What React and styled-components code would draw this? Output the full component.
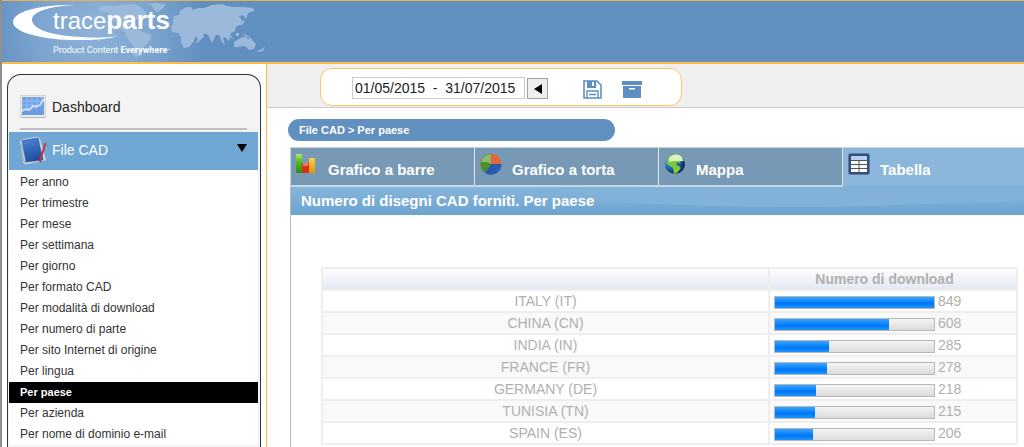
import React from 'react';
import styled, { createGlobalStyle, css } from 'styled-components';

const menuItems = [
    'Per anno',
    'Per trimestre',
    'Per mese',
    'Per settimana',
    'Per giorno',
    'Per formato CAD',
    'Per modalità di download',
    'Per numero di parte',
    'Per sito Internet di origine',
    'Per lingua',
    'Per paese',
    'Per azienda',
    'Per nome di dominio e-mail',
];

const downloads = [
    { country: 'ITALY (IT)', total: 849, share: 100 },
    { country: 'CHINA (CN)', total: 608, share: 72 },
    { country: 'INDIA (IN)', total: 285, share: 34 },
    { country: 'FRANCE (FR)', total: 278, share: 33 },
    { country: 'GERMANY (DE)', total: 218, share: 26 },
    { country: 'TUNISIA (TN)', total: 215, share: 25 },
    { country: 'SPAIN (ES)', total: 206, share: 24 },
];

function WorldMap() {
    return (
        <svg width="280" height="61" viewBox="2 1 280 61" aria-hidden="true">
            <defs>
                <radialGradient id="glow" gradientUnits="userSpaceOnUse" cx="95" cy="30" r="110">
                    <stop offset="0" stopColor="#8fb2d7" />
                    <stop offset="0.5" stopColor="#7da5d0" />
                    <stop offset="1" stopColor="#618fbf" />
                </radialGradient>
            </defs>
            <rect x="2" y="1" width="280" height="61" fill="url(#glow)" />
            <g fill="#9bbadb">
                <path d="M98 8l6-3 10 1 8-1 8-1 7 1 6 4 4 5-4 4-8 2-4 5-3 5 5 3-1 2-8-3-6-6-5-8-6-6-6 0z" />
                <path d="M147 4l9-1 10 1-3 4-5 4-4-2-2-4z" />
                <path d="M126 32l4-3 8 0 5 3 8 3 0 4-4 5-4 4-3 5-3 5-3-2 0-9-5-6-3-5z" />
                <path d="M173 21l1-5 5-1 1-4 6-4 5 0 2 3 5-2 6 0 8-3 10-1 5 2 7 1 9 0 10 1 1 3-6 2-2 6-3-4-4 1 3 4-1 4-5 3-1 4-4 2-1 3-1 5-4-4-2 1 2 7-3-3-3-7-3 0-4 8-3-6-2-3-4 0 1 3-5 4-4-6-2-3-7 0-2-3-3 1-2-2-5 2z" />
                <path d="M173 23l6-2 6 2 8 0 3 6 4 2-5 6-1 4-5 6-5 1-3-6 0-5-3-4-6-1-1-5z" />
                <path d="M198 39l2-1-2 5-2 0z" />
                <path d="M234 42l5-3 3-2 5 0 1 3 2-3 3 4 3 3-2 5-5 1-4-4-7 1-4 0z" />
                <path d="M228 34l3 2 3 3-3-1zM236 33l3 0 0 3-3 0zM243 34l6 2 0 1-5-1zM257 51l5-2 3-3-2 5-5 1zM243 20l2 1-3 4-2 0z" />
            </g>
        </svg>
    );
}

function Swoosh() {
    return (
        <svg width="110" height="40" viewBox="0 0 110 40" aria-hidden="true">
            <path
                fill="#fff"
                d="M64 2C30 1 1 8 1 19c0 12 38 19 69 18 14 0 26-1 36-4-12 2-26 2-36 1C45 33 21 28 20 17 20 8 40 3 64 2z"
            />
        </svg>
    );
}

function DashboardIcon() {
    return (
        <svg width="26" height="24" viewBox="0 0 26 24" aria-hidden="true">
            <rect x="0.5" y="0.5" width="25" height="22" fill="#ececec" stroke="#d4d4d4" />
            <path d="M1 22.500h24" stroke="#b4b4b4" />
            <rect x="2" y="2" width="22" height="18" fill="#73a3e8" />
            <path d="M2 6h22M2 10h22M2 14h22M7 2v18M12 2v18M17 2v18M22 2v18" stroke="#94bcf2" />
            <path d="M2 17l4-3 3 2 4-5 3 2 4-2 4-6v15H2z" fill="#5589d6" opacity="0.4" />
            <path d="M2 16l4-2 3 1 4-4 3 1 4-2 4-6" fill="none" stroke="#dfe9f8" strokeWidth="1.6" />
        </svg>
    );
}

function NotebookIcon() {
    return (
        <svg width="26" height="29" viewBox="0 0 26 29" aria-hidden="true">
            <defs>
                <linearGradient id="cover" x1="0" y1="0" x2="0.4" y2="1">
                    <stop offset="0" stopColor="#5287e0" />
                    <stop offset="1" stopColor="#1f4e9c" />
                </linearGradient>
            </defs>
            <path d="M0 5l3-2L18 0.500 20 3l6 21-3 1-18 3.500-2-2z" fill="#c8d6e6" />
            <path d="M2 4.500L18 2l5 22-17 2z" fill="url(#cover)" stroke="#34588f" strokeWidth="0.6" />
            <path d="M1 8l3 18 3 1" fill="none" stroke="#8d9db0" strokeWidth="0.8" />
            <path d="M25.500 7L21 22l-1 4" fill="none" stroke="#c3353a" strokeWidth="2" />
        </svg>
    );
}

function SaveIcon() {
    return (
        <svg width="19" height="19" viewBox="0 0 19 19" aria-hidden="true">
            <path d="M1 1h13l4 4v13H1z" fill="#fff" stroke="#5f8fc0" strokeWidth="1.6" />
            <path d="M4 1h9v7H4z" fill="#5f8fc0" />
            <path d="M9 2h2v4H9z" fill="#fff" />
            <path d="M4 18v-7h11v7M6 14.500h7" fill="none" stroke="#5f8fc0" strokeWidth="1.4" />
        </svg>
    );
}

function ArchiveIcon() {
    return (
        <svg width="20" height="19" viewBox="0 0 20 19" aria-hidden="true">
            <path d="M0 1h20v4H0zM1 6h18v12H1z" fill="#5f8fc0" />
            <path d="M7 8h6v1.500H7z" fill="#fff" />
        </svg>
    );
}

function BarsIcon() {
    return (
        <svg width="22" height="22" viewBox="0 0 22 22" aria-hidden="true">
            <defs>
                <linearGradient id="green" x1="0" y1="0" x2="0" y2="1">
                    <stop offset="0" stopColor="#b0f060" />
                    <stop offset="0.4" stopColor="#58b820" />
                    <stop offset="1" stopColor="#2f8d10" />
                </linearGradient>
                <linearGradient id="amber" x1="0" y1="0" x2="0" y2="1">
                    <stop offset="0" stopColor="#f8d048" />
                    <stop offset="1" stopColor="#e89408" />
                </linearGradient>
            </defs>
            <path d="M0 1h6v19H0z" fill="url(#green)" />
            <path d="M6 10h7v10H6z" fill="#d8301c" />
            <path d="M7 10h5v3H7z" fill="#ee7a5c" />
            <path d="M13 5h6v15h-6z" fill="url(#amber)" />
        </svg>
    );
}

function PieIcon() {
    return (
        <svg width="22" height="22" viewBox="0 0 22 22" aria-hidden="true">
            <circle cx="11" cy="12" r="10" fill="#3c5878" opacity="0.5" />
            <path d="M11 11V0.500a10.500 10.500 0 0 1 10.500 10.500z" fill="#e2683c" />
            <path d="M11 11h10.500A10.500 10.500 0 0 1 5 19.700z" fill="#2c58b4" />
            <path d="M11 11L5 19.700A10.500 10.500 0 0 1 11 0.500z" fill="#4f8c2c" />
            <path d="M11 11V1a10 10 0 0 0-10 9c4-2 7-1 10 1z" fill="#8cb870" />
        </svg>
    );
}

function GlobeIcon() {
    return (
        <svg width="22" height="22" viewBox="0 0 22 22" aria-hidden="true">
            <defs>
                <radialGradient id="sea" cx="0.3" cy="0.3" r="0.7">
                    <stop offset="0" stopColor="#a0d4f4" />
                    <stop offset="0.5" stopColor="#2c74b8" />
                    <stop offset="1" stopColor="#0c2c5c" />
                </radialGradient>
            </defs>
            <circle cx="11" cy="11" r="10" fill="url(#sea)" />
            <path d="M3 8c0-4 5-7 9-7 3 0 7 3 8 7l-3 0-1 2-3-1-1 3 3 1 2 2-4 5-3 1-1-6-4-3-2-1z" fill="#7cc838" />
            <path d="M5 5c3-4 9-5 13-1l1 4-5 0-5 0-4 1z" fill="#dcf0c4" />
        </svg>
    );
}

function TableIcon() {
    return (
        <svg width="22" height="22" viewBox="0 0 22 22" aria-hidden="true">
            <rect x="0.500" y="0.500" width="21" height="21" rx="2" fill="#345078" stroke="#5c7ca8" />
            <path d="M3 3h16v4H3z" fill="#b8ccf8" />
            <path d="M3 8h16v11H3z" fill="#fff" />
            <path d="M3 7.500h16M3 11.500h16M3 15.500h16M11 8v11" stroke="#50545c" />
        </svg>
    );
}

function Sidebar() {
    return (
        <SidebarColumn>
            <SidePanel>
                <MenuHeading href="#dashboard">
                    <DashboardIcon />
                    Dashboard
                </MenuHeading>
                <Divider />
                <MenuHeading href="#file-cad" $open>
                    <NotebookIcon />
                    File CAD
                    <Caret width="10" height="8" viewBox="0 0 10 8" aria-hidden="true">
                        <path d="M0 0h10L5 8z" />
                    </Caret>
                </MenuHeading>
                <Menu>
                    {menuItems.map((item) => (
                        <li key={item}>
                            <MenuLink href="#report" $active={item === 'Per paese'}>
                                {item}
                            </MenuLink>
                        </li>
                    ))}
                </Menu>
            </SidePanel>
        </SidebarColumn>
    );
}

function Toolbar() {
    return (
        <ToolbarStrip>
            <ToolbarBox>
                <DateInput
                    type="text"
                    aria-label="Periodo"
                    defaultValue={'01/05/2015\u00a0 -\u00a0 31/07/2015'}
                />
                <DateButton type="button" aria-label="Periodo precedente">
                    <svg width="8" height="10" viewBox="0 0 8 10" aria-hidden="true">
                        <path d="M8 0v10L0 5z" />
                    </svg>
                </DateButton>
                <ToolButtons>
                    <IconButton type="button" aria-label="Salva">
                        <SaveIcon />
                    </IconButton>
                    <IconButton type="button" aria-label="Archivia">
                        <ArchiveIcon />
                    </IconButton>
                </ToolButtons>
            </ToolbarBox>
        </ToolbarStrip>
    );
}

function DownloadTable() {
    return (
        <Table>
            <thead>
                <tr>
                    <HeadCell aria-label="Paese" />
                    <HeadCell $narrow>Numero di download</HeadCell>
                </tr>
            </thead>
            <tbody>
                {downloads.map(({ country, total, share }) => (
                    <Row key={country}>
                        <Cell>{country}</Cell>
                        <Cell>
                            <Meter>
                                <Track>
                                    <Fill style={{ width: `${share}%` }} />
                                </Track>
                                {total}
                            </Meter>
                        </Cell>
                    </Row>
                ))}
            </tbody>
        </Table>
    );
}

export default function App() {
    return (
        <Page>
            <GlobalStyle />
            <Header>
                <WorldMap />
                <Logo>
                    <Swoosh />
                    <Brand>
                        <BrandName>
                            trace<b>parts</b>
                        </BrandName>
                        <Slogan>
                            Product Content <b>Everywhere</b>
                            <small>™</small>
                        </Slogan>
                    </Brand>
                </Logo>
            </Header>
            <Body>
                <Sidebar />
                <Main>
                    <Toolbar />
                    <Content>
                        <Breadcrumb>File CAD &gt; Per paese</Breadcrumb>
                        <Tabs>
                            <Tab type="button"><BarsIcon /><span>Grafico a barre</span></Tab>
                            <Tab type="button"><PieIcon /><span>Grafico a torta</span></Tab>
                            <Tab type="button"><GlobeIcon /><span>Mappa</span></Tab>
                            <Tab type="button" $active><TableIcon /><span>Tabella</span></Tab>
                        </Tabs>
                        <Report>
                            <ReportTitle>
                                <Wave viewBox="0 0 734 28" preserveAspectRatio="none" aria-hidden="true">
                                    <defs>
                                        <linearGradient id="wave">
                                            <stop offset="0" stopColor="#82b2d9" stopOpacity="0" />
                                            <stop offset="0.35" stopColor="#82b2d9" />
                                        </linearGradient>
                                    </defs>
                                    <path fill="url(#wave)" d="M150 0H734V14C640 16 570 20 500 20C420 20 350 16 270 13L150 9z" />
                                </Wave>
                                <h1>Numero di disegni CAD forniti. Per paese</h1>
                            </ReportTitle>
                            <DownloadTable />
                        </Report>
                    </Content>
                </Main>
            </Body>
        </Page>
    );
}

const GlobalStyle = createGlobalStyle`
    * {
        box-sizing: border-box;
    }

    body {
        margin: 0;
        background: #fff;
        font-family: 'Liberation Sans', Arial, sans-serif;
        font-size: 14px;
    }
`;

const Page = styled.div`
    display: flex;
    flex-direction: column;
    min-height: 100vh;
    border-left: 2px solid #8f8f8f;
`;

const Header = styled.header`
    position: relative;
    display: flex;
    background: #618fbf;
    border-top: 1px solid #e8b050;
    border-bottom: 2px solid #fdbb45;
`;

const Logo = styled.div`
    position: absolute;
    top: 2px;
    left: 10px;
    color: #fff;

    > svg {
        display: block;
    }
`;

const Brand = styled.div`
    position: absolute;
    top: 3px;
    left: 41px;
    white-space: nowrap;
`;

const BrandName = styled.div`
    font-size: 24px;
    line-height: 28px;

    b {
        font-size: 26px;
    }
`;

const Slogan = styled.div`
    margin-top: 9px;
    font-family: 'Roboto', sans-serif;
    font-size: 9px;
    line-height: 12px;

    small {
        font-size: 5px;
        vertical-align: top;
    }
`;

const Body = styled.div`
    display: flex;
    flex: 1;
`;

const SidebarColumn = styled.nav`
    display: flex;
    flex: none;
    width: 265px;
    padding: 10px 5px 0 5px;
    border-right: 1px solid #fdbb45;
`;

const SidePanel = styled.div`
    flex: 1;
    padding: 14px 2px 0 1px;
    background: #f3f3f3;
    border: 1px solid #333;
    border-bottom: 0;
    border-radius: 14px 14px 0 0;
`;

const MenuHeading = styled.a`
    display: flex;
    align-items: center;
    gap: 6px;
    height: 38px;
    padding: 0 11px 2px;
    color: #222;
    text-decoration: none;

    ${({ $open }) => $open && css`
        background: #6fa6d3;
        color: #fff;
    `}
`;

const Caret = styled.svg`
    margin: 0 0 5px auto;
    fill: #000;
`;

const Divider = styled.hr`
    height: 2px;
    margin: 1px 11px 2px;
    border: 0;
    background: #c0c0c0;
`;

const Menu = styled.ul`
    margin: 0;
    padding: 2px 0 0;
    background: #fff;
    list-style: none;
`;

const MenuLink = styled.a`
    display: block;
    padding: 0 11px;
    color: #333;
    font-size: 12px;
    line-height: 21px;
    text-decoration: none;

    ${({ $active }) => $active && css`
        background: #000;
        color: #fff;
        font-size: 11px;
        font-weight: bold;
    `}
`;

const Main = styled.main`
    display: flex;
    flex: 1;
    flex-direction: column;
    min-width: 0;
`;

const ToolbarStrip = styled.div`
    padding: 4px 53px 1px;
    background: #efefef;
    border-bottom: 1px solid #ccc;
`;

const ToolbarBox = styled.div`
    display: flex;
    align-items: center;
    max-width: 362px;
    height: 38px;
    padding: 2px 31px 0;
    background: #fff;
    border: 1px solid #fdc468;
    border-radius: 12px;
`;

const DateInput = styled.input`
    width: 173px;
    height: 22px;
    padding: 0 2px;
    border: 1px solid #ccc;
    color: #222;
    font: inherit;
`;

const DateButton = styled.button`
    display: flex;
    align-items: center;
    justify-content: center;
    width: 21px;
    height: 21px;
    margin-left: 2px;
    padding: 2px 0 0 1px;
    background: #efefef;
    border: 1px solid #a0a0a8;
`;

const ToolButtons = styled.div`
    display: flex;
    gap: 20px;
    margin-left: 35px;
    padding-top: 2px;
`;

const IconButton = styled.button`
    display: flex;
    padding: 0;
    background: none;
    border: 0;
`;

const Content = styled.div`
    display: flex;
    flex: 1;
    flex-direction: column;
    padding: 11px 0 0 21px;
`;

const Breadcrumb = styled.div`
    max-width: 327px;
    padding: 0 11px;
    background: #618fbf;
    border-radius: 11px;
    color: #fff;
    font-size: 11px;
    font-weight: bold;
    line-height: 22px;
`;

const Tabs = styled.div`
    display: flex;
    margin: 6px 0 0 2px;
    border-top: 1px solid #ccd2d8;
    border-left: 1px solid #ccd2d8;
`;

const Tab = styled.button`
    display: flex;
    align-items: flex-start;
    gap: 10px;
    flex: 0 0 184px;
    height: 39px;
    padding: 5px 5px 0;
    background: #7799b6;
    border: 0;
    border-right: 1px solid #dde8f0;
    border-bottom: 2px solid #c5d8e8;
    color: #fff;
    font: bold 15px 'Liberation Sans', Arial, sans-serif;

    span {
        padding-top: 8px;
        line-height: 18px;
    }

    ${({ $active }) => $active && css`
        flex: 1;
        background: #8cb7dc;
        border-color: #82aed4;
        border-right: 0;
        border-bottom-width: 1px;
    `}
`;

const Report = styled.section`
    flex: 1;
    border-left: 1px solid #bbb;
    margin-left: 2px;
`;

const ReportTitle = styled.div`
    position: relative;
    background: linear-gradient(#86b4da, #6ca4d0);

    h1 {
        position: relative;
        margin: 0;
        padding: 0 10px;
        color: #fff;
        font-size: 15px;
        line-height: 28px;
    }
`;

const Wave = styled.svg`
    position: absolute;
    inset: 0;
    width: 100%;
    height: 100%;
`;

const Table = styled.table`
    width: calc(100% - 36px);
    margin: 52px 6px 0 30px;
    border-collapse: collapse;
    table-layout: fixed;
    color: #b0b0b0;
`;

const HeadCell = styled.th`
    width: ${({ $narrow }) => ($narrow ? '248px' : 'auto')};
    height: 22px;
    padding: 0 17px 0 0;
    border: 2px solid #eee;
    background: linear-gradient(#fdfdfd, #e4e9f3);
    line-height: 20px;
`;

const Row = styled.tr`
    &:nth-child(even) {
        background: #f9f9f9;
    }
`;

const Cell = styled.td`
    height: 22px;
    padding: 0 4px;
    border: 2px solid #eee;
    line-height: 20px;
    text-align: center;
`;

const Meter = styled.div`
    display: flex;
    align-items: center;
    gap: 3px;
`;

const Track = styled.div`
    width: 161px;
    height: 13px;
    margin-top: 3px;
    border: 1px solid #b8b8b8;
    background: linear-gradient(#f4f4f4, #dcdcdc);
`;

const Fill = styled.div`
    height: 100%;
    background: linear-gradient(#38a4ff, #0a84ff 45%, #0074f4 60%, #1c98ff);
`;
